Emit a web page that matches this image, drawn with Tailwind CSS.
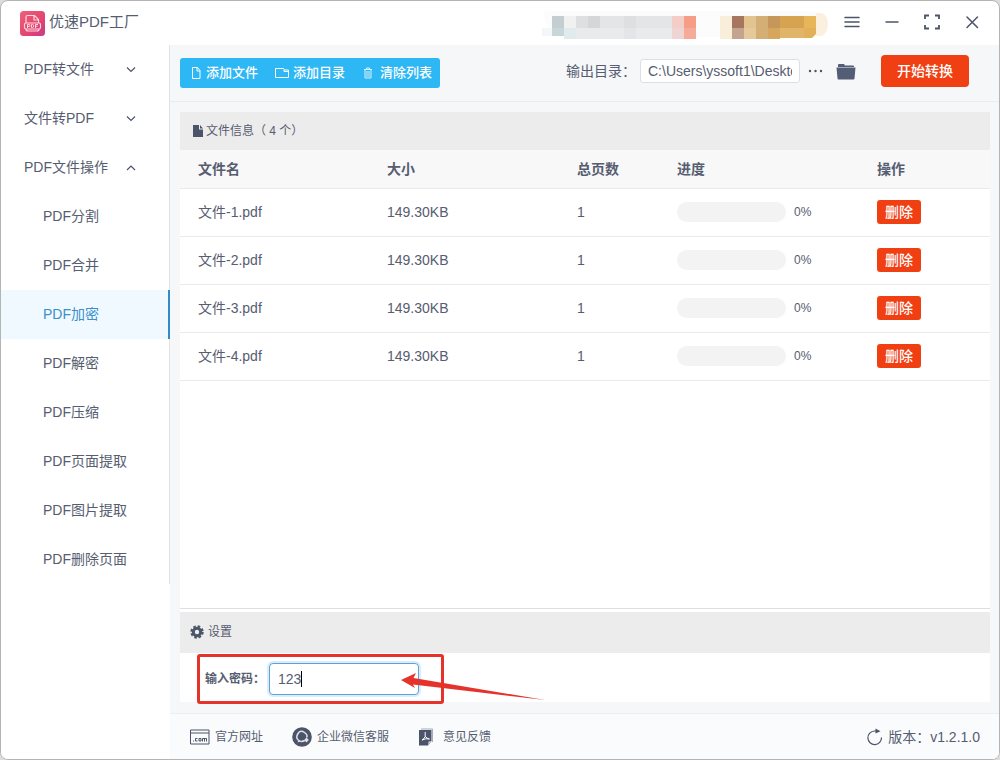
<!DOCTYPE html>
<html lang="zh-CN">
<head>
<meta charset="utf-8">
<meta name="viewport" content="width=device-width, initial-scale=1">
<title>优速PDF工厂</title>
<script src="https://cdn.jsdelivr.net/npm/@tailwindcss/browser@4"></script>
</head>
<body class="bg-[#dcdcdc] font-['Liberation_Sans','Noto_Sans_CJK_SC',sans-serif] text-sm text-[#565d70]">
<div class="flex min-h-screen flex-col overflow-hidden rounded-lg border border-[#b4b4b4] bg-white">

  <header class="flex h-11 shrink-0 items-center pr-[17px] pl-[19px]">
    <svg class="size-[25px]" viewBox="0 0 25 25" fill="none" aria-hidden="true">
      <defs><linearGradient id="logo" x1="0" y1="0" x2="1" y2="1"><stop offset="0" stop-color="#f0607a"/><stop offset=".6" stop-color="#e2456f"/><stop offset="1" stop-color="#c93a8e"/></linearGradient></defs>
      <rect width="25" height="25" rx="3.500" fill="url(#logo)"/>
      <path d="M6 12V6q0-1.500 1.500-1.500h7l4 4V12M14 4.500v4.500h4.500M6 18q0 2 2 2h9q2 0 2-2" stroke="#fbd5dd" stroke-width="1.200"/>
      <rect x="4.500" y="12" width="16" height="6" rx="1.500" stroke="#fbd5dd" stroke-width="1.200"/>
      <path d="M7.500 17v-3.500h1.500q1 0 1 1t-1 1H7.500M11.500 13.500V16.500h1q1.200 0 1.200-1.500t-1.200-1.500zM15.500 17v-3.500h2.500M15.500 15.200h2" stroke="#fbd5dd"/>
    </svg>
    <h1 class="ml-1 flex-1 pb-0.5 text-[15px]">优速PDF工厂</h1>
    <svg class="h-9 w-[290px] shrink-0 -translate-y-px" viewBox="0 0 290 36" aria-hidden="true">
      <path d="M4 7h260q24 0 24 12t-14 14H30Q4 33 4 7z" fill="#fcfcfc"/>
      <g shape-rendering="crispEdges">
      <path d="M2 24h10v8H2z" fill="#f3f7f7"/>
      <path d="M12 12h12v12H12z" fill="#c4cdcf"/><path d="M12 24h12v8H12z" fill="#c9d6d8"/>
      <path d="M24 12h12v12H24z" fill="#f1f1f2"/><path d="M24 24h12v11H24z" fill="#e1eaec"/>
      <path d="M36 12h12v12H36zM84 12h12v12H84z" fill="#dedfe1"/><path d="M48 12h12v12H48z" fill="#d5d6d9"/>
      <path d="M60 12h24v12H60zM96 12h36v12H96z" fill="#e4e5e7"/>
      <path d="M36 24h96v11H36z" fill="#e9eaec"/><path d="M84 24h12v11H84z" fill="#e4e5e8"/>
      <path d="M132 12h12v12h-12z" fill="#f3cdc8"/><path d="M132 24h12v11h-12z" fill="#eed4d2"/>
      <path d="M144 12h12v12h-12z" fill="#f69d87"/><path d="M144 24h12v11h-12z" fill="#f5aa9a"/>
      <path d="M180 12h12v23h-12z" fill="#f8eeda"/>
      <path d="M192 12h12v12h-12z" fill="#a6765f"/><path d="M192 24h12v11h-12z" fill="#c3a48f"/>
      <path d="M204 12h12v12h-12z" fill="#e3c48f"/><path d="M204 24h12v11h-12z" fill="#e5c99a"/>
      <path d="M216 12h12v23h-12z" fill="#d3af76"/>
      <path d="M228 12h12v12h-12z" fill="#c5975a"/><path d="M228 24h12v11h-12z" fill="#d5a65c"/>
      <path d="M240 12h24v12h-24z" fill="#d6a450"/><path d="M240 24h24v10h-24z" fill="#e0b568"/>
      </g>
      <path d="M264 12h12v12h-12z" fill="#e7b65b"/><path d="M264 24h12v6l-4 4h-8z" fill="#e2b059"/>
      <path d="M276 9h6q6 3 6 11t-6 12h-6z" fill="#fbf0dd"/>
    </svg>
    <div class="ml-3 flex items-center gap-5 pb-0.5">
      <button type="button" aria-label="菜单" class="grid size-5 place-items-center"><svg class="size-5" viewBox="0 0 20 20" stroke="#4b5468" stroke-width="1.500" stroke-linecap="round"><path d="M3 5.500h14M3 10h14M3 14.500h14"/></svg></button>
      <button type="button" aria-label="最小化" class="grid size-5 place-items-center"><svg class="size-5" viewBox="0 0 20 20" stroke="#4b5468" stroke-width="1.500"><path d="M3.500 10h13"/></svg></button>
      <button type="button" aria-label="最大化" class="grid size-5 place-items-center"><svg class="size-5" viewBox="0 0 20 20" fill="none" stroke="#4b5468" stroke-width="1.800"><path d="M3 7V3.500h4M13 3.500h4V7M17 13v3.500h-4M7 16.500H3V13"/></svg></button>
      <button type="button" aria-label="关闭" class="grid size-5 place-items-center"><svg class="size-5" viewBox="0 0 20 20" stroke="#4b5468" stroke-width="1.500" stroke-linecap="round"><path d="M5 5l10.500 10.500M15.500 5L5 15.500"/></svg></button>
    </div>
  </header>

  <div class="flex flex-1">
    <aside class="w-[169px] shrink-0 bg-white">
      <nav class="border-r border-[#e3e3e3]">
        <button type="button" class="flex h-[49px] w-full items-center justify-between pr-8 pb-0.5 pl-[23px]">PDF转文件<svg class="size-3" viewBox="0 0 12 12" fill="none" stroke="#4b5468" stroke-width="1.200"><path d="M2 4.500l4 4 4-4"/></svg></button>
        <button type="button" class="flex h-[49px] w-full items-center justify-between pr-8 pb-0.5 pl-[23px]">文件转PDF<svg class="size-3" viewBox="0 0 12 12" fill="none" stroke="#4b5468" stroke-width="1.200"><path d="M2 4.500l4 4 4-4"/></svg></button>
        <button type="button" aria-expanded="true" class="flex h-[49px] w-full items-center justify-between pr-8 pb-0.5 pl-[23px]">PDF文件操作<svg class="size-3" viewBox="0 0 12 12" fill="none" stroke="#4b5468" stroke-width="1.200"><path d="M2 9l4-4 4 4"/></svg></button>
        <a href="#" class="flex h-[49px] items-center pb-0.5 pl-[42px]">PDF分割</a>
        <a href="#" class="flex h-[49px] items-center pb-0.5 pl-[42px]">PDF合并</a>
        <a href="#" aria-current="page" class="-mr-px flex h-[49px] items-center border-r-2 border-[#3489c9] bg-[#f0f9ff] pb-0.5 pl-[42px] text-[#3b8fcb]">PDF加密</a>
        <a href="#" class="flex h-[49px] items-center pb-0.5 pl-[42px]">PDF解密</a>
        <a href="#" class="flex h-[49px] items-center pb-0.5 pl-[42px]">PDF压缩</a>
        <a href="#" class="flex h-[49px] items-center pb-0.5 pl-[42px]">PDF页面提取</a>
        <a href="#" class="flex h-[49px] items-center pb-0.5 pl-[42px]">PDF图片提取</a>
        <a href="#" class="flex h-[49px] items-center pb-0.5 pl-[42px]">PDF删除页面</a>
      </nav>
    </aside>

    <div class="flex min-w-0 flex-1 flex-col bg-[#f6f7f9]">
      <div class="flex h-[57px] items-center border-b border-[#ececef] pr-[29px] pl-2.5">
        <div class="flex h-[30px] items-center gap-[17px] rounded-[3px] bg-[#2db7f5] pr-2 pl-2.5 text-[13px] font-medium text-white">
          <button type="button" class="flex items-center gap-1"><svg class="size-3" viewBox="0 0 12 12" fill="none" stroke="#fff"><path d="M2.500.5h5l2.500 3v8H2.500zM7 .5V4h3"/></svg>添加文件</button>
          <button type="button" class="flex items-center gap-1"><svg class="h-3 w-3.5" viewBox="0 0 14 12" fill="none" stroke="#fff"><path d="M.5 10.500v-9h8l1 1.500h4v7.500zM9 3v1.500h4.500"/></svg>添加目录</button>
          <button type="button" class="flex items-center gap-1.5"><svg class="size-3" viewBox="0 0 12 12" fill="none" stroke="#d9f2ff"><path d="M2 2.500h8M4.500 2V1h3v1M3 3v8h6V3M5 4v6M7 4v6"/></svg>清除列表</button>
        </div>
        <div class="ml-auto flex items-center pb-1">
          <label for="out">输出目录：</label>
          <input id="out" type="text" value="C:\Users\yssoft1\Desktop" class="ml-1 h-6 w-40 rounded-[3px] border border-[#dcdfe6] bg-white px-[7px] outline-none">
          <button type="button" aria-label="浏览" class="ml-2"><svg class="h-5 w-4" viewBox="0 0 16 20" fill="#4b5468"><circle cx="2" cy="10" r="1.200"/><circle cx="7.500" cy="10" r="1.200"/><circle cx="13" cy="10" r="1.200"/></svg></button>
          <button type="button" aria-label="打开目录" class="ml-3"><svg class="size-5" viewBox="0 0 20 20" fill="#535d75"><path d="M2 6V4q0-1 1-1h5l1 1.500h8q1 0 1 1V6z"/><path d="M.5 6.500h19l-1 11q-.1 1-1 1H2.500q-1 0-1-1z"/></svg></button>
        </div>
        <button type="button" class="mr-px mb-1 ml-[25px] h-8 rounded bg-[#f13f14] px-4 font-medium text-white">开始转换</button>
      </div>

      <main class="flex flex-1 flex-col pt-2.5 pr-[9px] pb-[11px] pl-2.5">
        <section class="flex flex-1 flex-col border-b border-[#dddee1] bg-white">
          <h2 class="flex h-[38px] items-center bg-[#ececec] pl-3 text-xs"><svg class="mr-0.5 h-3 w-3" viewBox="0 0 12 12" fill="#4b5468"><path d="M1 0h6v4.500h4V12H1z"/><path d="M8 0l3 3.500H8z"/></svg>文件信息（ 4 个）</h2>
          <table class="w-full table-fixed text-left">
            <colgroup><col class="w-[189px]"><col class="w-[190px]"><col class="w-[100px]"><col class="w-[200px]"><col></colgroup>
            <thead class="bg-[#f8f8f9]"><tr class="h-[38px] border-b border-[#e8eaec]"><th class="px-[18px] font-bold">文件名</th><th class="px-[18px] font-bold">大小</th><th class="px-[18px] font-bold">总页数</th><th class="px-[18px] font-bold">进度</th><th class="px-[18px] font-bold">操作</th></tr></thead>
            <tbody>
              <tr class="h-12 border-b border-[#e8eaec]"><td class="px-[18px]">文件-1.pdf</td><td class="px-[18px]">149.30KB</td><td class="px-[18px]">1</td><td class="px-[18px]"><div class="flex items-center gap-2"><span class="h-5 w-[109px] rounded-full bg-[#f3f3f3]"></span><span class="text-xs">0%</span></div></td><td class="px-[18px]"><button type="button" class="h-6 w-11 rounded-[3px] bg-[#f13f14] font-medium text-white">删除</button></td></tr>
              <tr class="h-12 border-b border-[#e8eaec]"><td class="px-[18px]">文件-2.pdf</td><td class="px-[18px]">149.30KB</td><td class="px-[18px]">1</td><td class="px-[18px]"><div class="flex items-center gap-2"><span class="h-5 w-[109px] rounded-full bg-[#f3f3f3]"></span><span class="text-xs">0%</span></div></td><td class="px-[18px]"><button type="button" class="h-6 w-11 rounded-[3px] bg-[#f13f14] font-medium text-white">删除</button></td></tr>
              <tr class="h-12 border-b border-[#e8eaec]"><td class="px-[18px]">文件-3.pdf</td><td class="px-[18px]">149.30KB</td><td class="px-[18px]">1</td><td class="px-[18px]"><div class="flex items-center gap-2"><span class="h-5 w-[109px] rounded-full bg-[#f3f3f3]"></span><span class="text-xs">0%</span></div></td><td class="px-[18px]"><button type="button" class="h-6 w-11 rounded-[3px] bg-[#f13f14] font-medium text-white">删除</button></td></tr>
              <tr class="h-12 border-b border-[#e8eaec]"><td class="px-[18px]">文件-4.pdf</td><td class="px-[18px]">149.30KB</td><td class="px-[18px]">1</td><td class="px-[18px]"><div class="flex items-center gap-2"><span class="h-5 w-[109px] rounded-full bg-[#f3f3f3]"></span><span class="text-xs">0%</span></div></td><td class="px-[18px]"><button type="button" class="h-6 w-11 rounded-[3px] bg-[#f13f14] font-medium text-white">删除</button></td></tr>
            </tbody>
          </table>
        </section>
        <section class="border-t-[3px] border-white bg-white">
          <h2 class="flex h-[41px] items-center gap-1 bg-[#ececec] pb-0.5 pl-2.5 text-xs"><svg class="size-3.5" viewBox="0 0 14 14" fill="none" stroke="#4b5468"><circle cx="7" cy="7" r="3.700" stroke-width="3"/><circle cx="7" cy="7" r="5.700" stroke-width="2" stroke-dasharray="2.600 1.877"/></svg>设置</h2>
          <div class="relative flex h-[49px] items-center pt-0.5 pl-[25px]">
            <label for="pwd" class="text-xs font-bold">输入密码：</label>
            <div class="ml-1 flex h-8 w-[150px] items-center rounded border border-[#57a3dc] bg-white px-2 shadow-[0_0_0_2px_#dcedf9]">
              <input id="pwd" type="text" value="123" class="w-[23px] outline-none"><span class="h-4 w-px bg-black"></span>
            </div>
            <div class="pointer-events-none absolute top-px left-[17px] h-[50px] w-[247px] rounded-[3px] border-3 border-[#e5322b]"></div>
            <svg class="pointer-events-none absolute top-4 left-[221px] h-8 w-[148px]" viewBox="0 0 148 32" fill="#e5322b" aria-hidden="true"><path d="M0 11L15 4l-2.500 5L144 31 12 15.500 14 19z"/></svg>
          </div>
        </section>
      </main>

      <footer class="flex h-[46px] items-center border-t border-[#eceef0] bg-[#fafbfc] pr-[19px] pl-5 text-xs">
        <a href="#" class="flex items-center gap-[5px]"><svg class="h-4 w-5" viewBox="0 0 20 16" fill="none" stroke="#4b5468"><path d="M.5 1h18.500v14H.5zM.5 4h18.500"/><path d="M3 12h1M7.500 9.500H5.500v2.500h2M9 9.500h2v2.500H9zM12.500 12.500v-3h4v3M14.500 9.500v3"/></svg>官方网址</a>
        <a href="#" class="ml-[29px] flex items-center gap-[5px]"><svg class="size-5" viewBox="0 0 20 20" fill="none"><circle cx="10" cy="10" r="9.800" fill="#4b5468"/><path d="M12.800 13.500Q9 15.500 6.200 13T6 6.500 12.500 5.500 14.500 10.500" stroke="#dfe2e8" stroke-width="1.500"/><path d="M6.500 13.500L5.500 15.500l3-1z" fill="#dfe2e8"/><path d="M14.500 10.500l2.300 2.500-2.300 2.500-2.300-2.500z" fill="#dfe2e8"/></svg>企业微信客服</a>
        <a href="#" class="ml-[29px] flex items-center gap-[7px]"><svg class="h-5 w-[18px]" viewBox="0 0 18 20" fill="none"><path d="M3 2h11.500V15" stroke="#a5abb8"/><path d="M1 3h12.500v11L10 18.500H1z" fill="#4b5468"/><path d="M7.200 5v4.500M4 13q2-1 3.200-3.500Q9 11.500 11.500 12M4 13q4-2 7.500-1" stroke="#fff"/><path d="M10 18.500l.5-4 3-.5z" fill="#c7cbd4"/></svg>意见反馈</a>
        <button type="button" class="ml-auto flex items-center gap-1 text-sm"><svg class="size-[18px]" viewBox="0 0 18 18" fill="none" stroke="#4b5468" stroke-width="1.200"><path d="M15.500 9.500A6.800 6.800 0 1 1 8.500 3h2"/><path d="M9.500.5l5 2.700-5 2.300z" fill="#4b5468" stroke="none"/></svg>版本：v1.2.1.0</button>
      </footer>
    </div>
  </div>
</div>
</body>
</html>
